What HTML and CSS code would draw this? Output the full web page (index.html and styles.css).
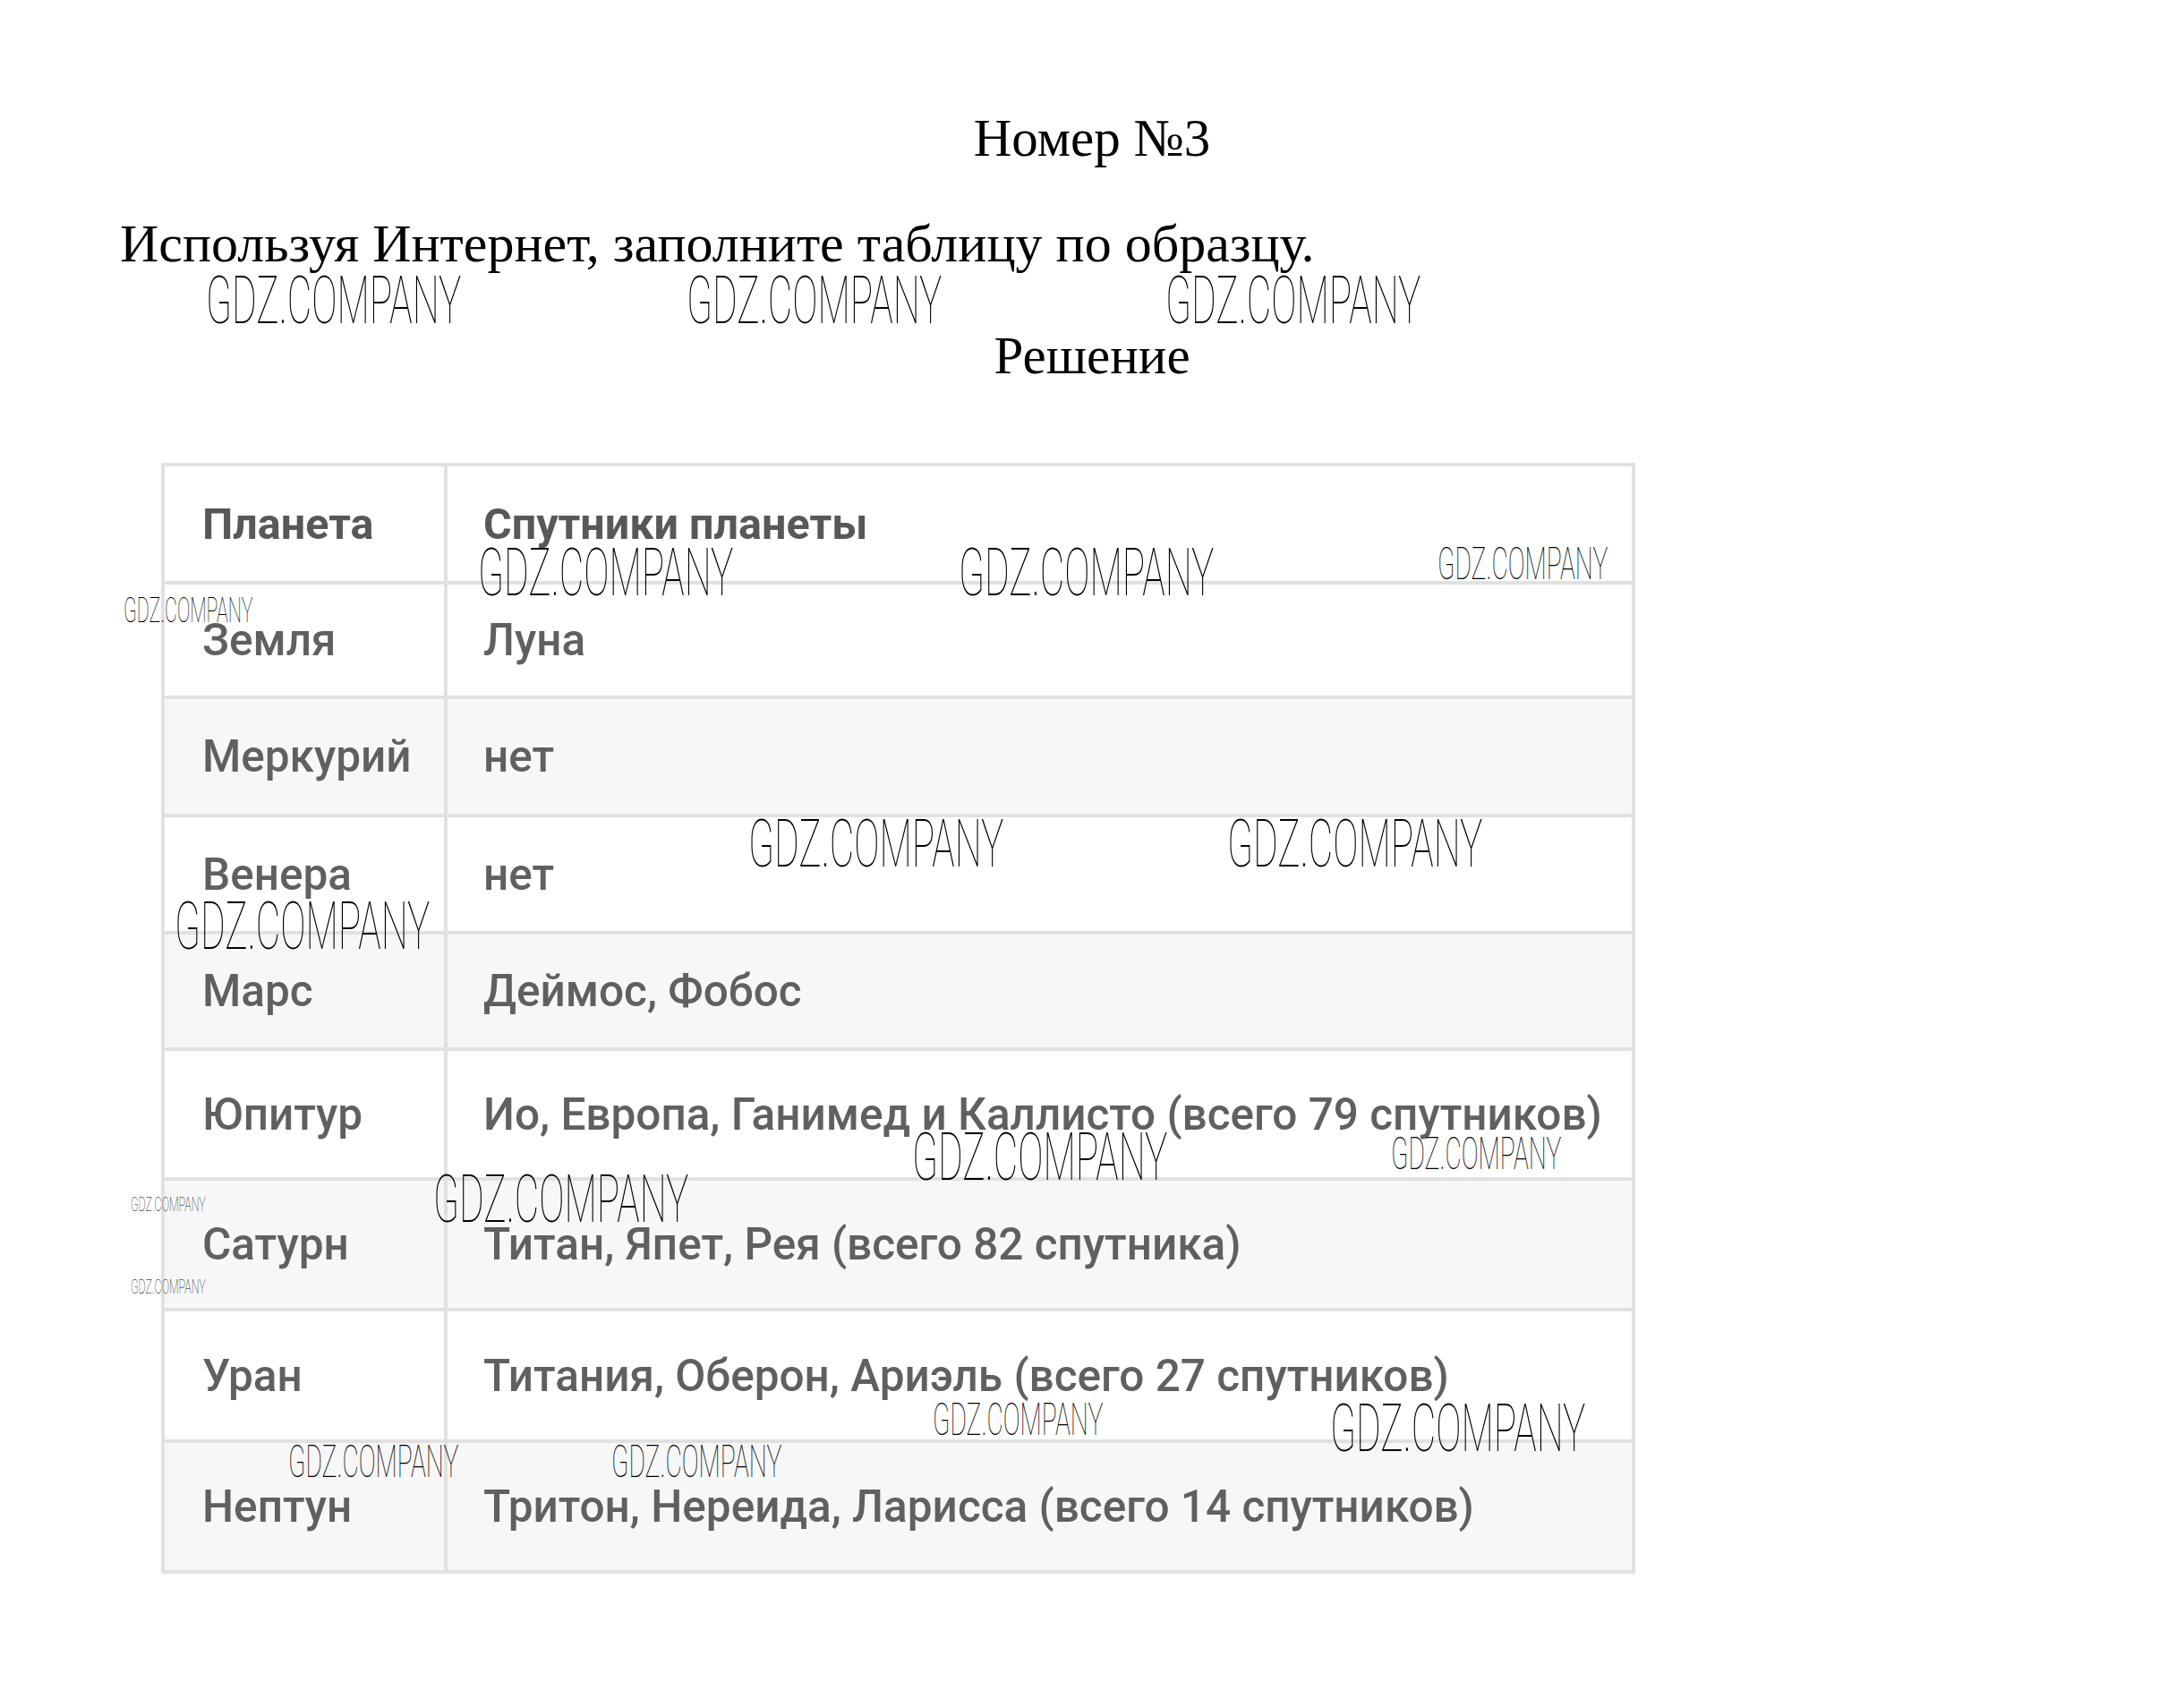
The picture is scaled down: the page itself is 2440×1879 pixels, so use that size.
FILE: index.html
```html
<!DOCTYPE html>
<html lang="ru">
<head>
<meta charset="utf-8">
<title>Номер №3</title>
<link rel="stylesheet" href="styles.css">
</head>
<body>
<div class="page">
  <h1 class="title">Номер №3</h1>
  <p class="task">Используя Интернет, заполните таблицу по образцу.</p>
  <h2 class="solution">Решение</h2>

  <div class="tbl">
    <div class="row head"><div class="c1">Планета</div><div class="c2">Спутники планеты</div></div>
    <div class="row"><div class="c1">Земля</div><div class="c2">Луна</div></div>
    <div class="row alt"><div class="c1">Меркурий</div><div class="c2">нет</div></div>
    <div class="row"><div class="c1">Венера</div><div class="c2">нет</div></div>
    <div class="row alt"><div class="c1">Марс</div><div class="c2">Деймос, Фобос</div></div>
    <div class="row"><div class="c1">Юпитур</div><div class="c2">Ио, Европа, Ганимед и Каллисто (всего 79 спутников)</div></div>
    <div class="row alt"><div class="c1">Сатурн</div><div class="c2">Титан, Япет, Рея (всего 82 спутника)</div></div>
    <div class="row"><div class="c1">Уран</div><div class="c2">Титания, Оберон, Ариэль (всего 27 спутников)</div></div>
    <div class="row alt"><div class="c1">Нептун</div><div class="c2">Тритон, Нереида, Ларисса (всего 14 спутников)</div></div>
  </div>

  <span class="wm wl w1">GDZ.COMPANY</span>
  <span class="wm wl w2">GDZ.COMPANY</span>
  <span class="wm wl w3">GDZ.COMPANY</span>
  <span class="wm wl w4">GDZ.COMPANY</span>
  <span class="wm wl w5">GDZ.COMPANY</span>
  <span class="wm wm2 w6">GDZ.COMPANY</span>
  <span class="wm ws w7">GDZ.COMPANY</span>
  <span class="wm wl w8">GDZ.COMPANY</span>
  <span class="wm wl w9">GDZ.COMPANY</span>
  <span class="wm wl w10">GDZ.COMPANY</span>
  <span class="wm wl w11">GDZ.COMPANY</span>
  <span class="wm wm2 w12">GDZ.COMPANY</span>
  <span class="wm wl w13">GDZ.COMPANY</span>
  <span class="wm wt w14">GDZ.COMPANY</span>
  <span class="wm wt w15">GDZ.COMPANY</span>
  <span class="wm wm2 w16">GDZ.COMPANY</span>
  <span class="wm wl w17">GDZ.COMPANY</span>
  <span class="wm wm2 w18">GDZ.COMPANY</span>
  <span class="wm wm2 w19">GDZ.COMPANY</span>
</div>
</body>
</html>
```

FILE: styles.css
```css
html, body {
  margin: 0;
  padding: 0;
  background: #ffffff;
}

.page {
  position: relative;
  width: 2440px;
  height: 1879px;
  padding-top: 125px;
  box-sizing: border-box;
  font-family: "Liberation Serif", "Times New Roman", serif;
  color: #000;
  overflow: hidden;
}

.title, .task, .solution {
  font-family: "Liberation Serif", "Times New Roman", serif;
  font-weight: normal;
  margin: 0;
}

.title {
  font-size: 59px;
  line-height: 59px;
  text-align: center;
}

.task {
  font-size: 60px;
  line-height: 60px;
  margin-top: 58px;
  padding-left: 134px;
}

.solution {
  font-size: 59px;
  line-height: 59px;
  margin-top: 66px;
  text-align: center;
}

/* table */
.tbl {
  margin-top: 90px;
  margin-left: 180px;
  width: 1647px;
  border: 4px solid #e1e1e1;
  box-sizing: border-box;
  font-family: Roboto, "Liberation Sans", sans-serif;
  font-size: 49.5px;
  font-weight: 500;
  color: #606060;
}

.row {
  display: grid;
  grid-template-columns: 316px 1fr;
  background: #ffffff;
  border-bottom: 4px solid #e1e1e1;
  box-sizing: content-box;
}

.row:last-child {
  border-bottom: none;
}

.row.alt {
  background: #f7f7f7;
}

.row:nth-child(1) { height: 128px; }
.row:nth-child(2) { height: 124px; }
.row:nth-child(3) { height: 128px; }
.row:nth-child(4) { height: 127px; }
.row:nth-child(5) { height: 126px; }
.row:nth-child(6) { height: 141px; }
.row:nth-child(7) { height: 142px; }
.row:nth-child(8) { height: 143px; }
.row:nth-child(9) { height: 142px; }

.c1, .c2 {
  display: flex;
  align-items: center;
  white-space: nowrap;
}

.c1 {
  padding-left: 42px;
  border-right: 4px solid #e1e1e1;
}

.c2 {
  padding-left: 40px;
}

.head {
  font-size: 48.5px;
  font-weight: 700;
  color: #585858;
}

/* watermarks */
.wm {
  position: absolute;
  font-family: Roboto, "DejaVu Sans", sans-serif;
  font-weight: 100;
  line-height: 1;
  color: #000;
  white-space: nowrap;
  transform: scaleX(0.565);
  transform-origin: left top;
}

.wl  { font-size: 75px; }
.wm2 { font-size: 50px; }
.ws  { font-size: 38px; }
.wt  { font-size: 22px; }

.w1  { left: 230px;  top: 298px; }
.w2  { left: 767px;  top: 298px; }
.w3  { left: 1302px; top: 298px; }
.w4  { left: 534px;  top: 602px; }
.w5  { left: 1071px; top: 602px; }
.w6  { left: 1606px; top: 605px; }
.w7  { left: 138px;  top: 663px; }
.w8  { left: 836px;  top: 905px; }
.w9  { left: 1371px; top: 905px; }
.w10 { left: 195px;  top: 997px; }
.w11 { left: 1019px; top: 1255px; }
.w12 { left: 1554px; top: 1264px; }
.w13 { left: 484px;  top: 1302px; }
.w14 { left: 146px;  top: 1335px; }
.w15 { left: 146px;  top: 1427px; }
.w16 { left: 1042px; top: 1561px; }
.w17 { left: 1486px; top: 1558px; }
.w18 { left: 322px;  top: 1608px; }
.w19 { left: 683px;  top: 1608px; }
```
